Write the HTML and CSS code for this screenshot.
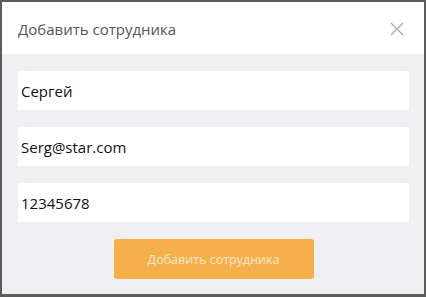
FILE: index.html
```html
<!DOCTYPE html>
<html lang="ru">
<head>
<meta charset="utf-8">
<link rel="stylesheet" href="styles.css">
</head>
<body>
<div class="modal">
  <div class="header">
    <div class="title">Добавить сотрудника</div>
    <svg class="close" width="14" height="14" viewBox="0 0 14 14"><path d="M1 1L13 13M13 1L1 13" stroke="#a8a8a8" stroke-width="1.2" fill="none"/></svg>
  </div>
  <div class="body">
    <div class="field">Сергей</div>
    <div class="field">Serg@star.com</div>
    <div class="field">12345678</div>
    <div class="actions"><div class="btn">Добавить сотрудника</div></div>
  </div>
</div>
</body>
</html>
```
FILE: styles.css
```css
html, body { margin: 0; padding: 0; }
body { width: 426px; height: 297px; font-family: "Open Sans", "Noto Sans", sans-serif; }
.modal {
  box-sizing: border-box;
  width: 426px; height: 297px;
  border: 2px solid #5c5c5c;
  border-bottom-width: 3px;
  background: #f0f0f2;
  display: flex; flex-direction: column;
}
.header {
  height: 52px; background: #fff;
  display: flex; align-items: center; justify-content: space-between;
  padding: 0 20px 0 16px;
}
.title { font-size: 15px; color: #555; margin-top: 2px; }
.close { margin-top: 2px; }
.body { padding: 17px 15px 0 16px; display: flex; flex-direction: column; gap: 17px; }
.field {
  height: 39px; background: #fff;
  display: flex; align-items: center;
  padding-left: 3px;
  font-size: 15px; color: #111;
}
.actions { display: flex; justify-content: center; }
.btn {
  width: 200px; height: 40px; border-radius: 3px;
  background: #f5b04b; color: #fdeacb;
  font-size: 12.5px;
  display: flex; align-items: center; justify-content: center;
}
```
